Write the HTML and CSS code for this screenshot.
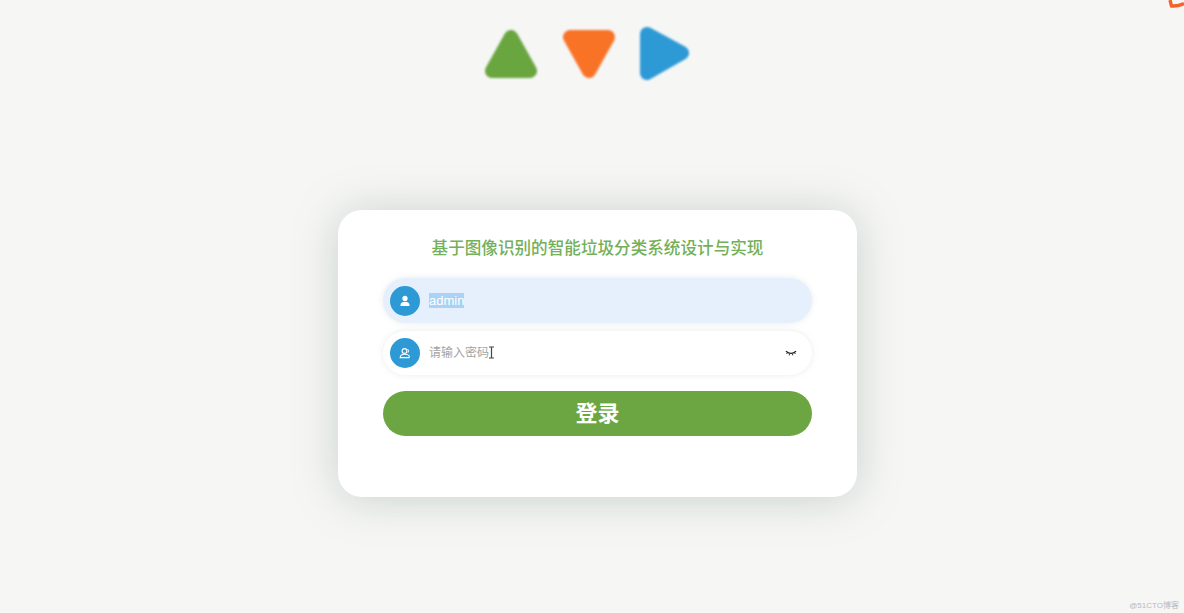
FILE: index.html
```html
<!DOCTYPE html>
<html lang="zh-CN">
<head>
    <meta charset="UTF-8">
    <meta name="viewport" content="width=device-width, initial-scale=1.0">
    <title>登录</title>
    <link rel="stylesheet" href="styles.css">
</head>
<body>
    <svg class="corner-mark" width="16" height="9" viewBox="0 0 16 9">
        <path d="M2 0 L3.5 6 Q10 6.5 16 3.5" fill="none" stroke="#f2642a" stroke-width="3.4"/>
    </svg>

    <div class="logo">
        <svg width="54" height="50" viewBox="0 0 54 50">
            <path d="M27 9 L46 43 H8 Z" fill="#69a63f" stroke="#69a63f" stroke-width="14" stroke-linejoin="round"/>
        </svg>
        <svg width="54" height="50" viewBox="0 0 54 50">
            <path d="M8 9 H46 L27 43 Z" fill="#f97327" stroke="#f97327" stroke-width="14" stroke-linejoin="round"/>
        </svg>
        <svg width="50" height="54" viewBox="0 0 50 54">
            <path d="M8 8 L43 27 L8 47 Z" fill="#2d9ad6" stroke="#2d9ad6" stroke-width="14" stroke-linejoin="round"/>
        </svg>
    </div>

    <div class="card">
        <h3 class="title">基于图像识别的智能垃圾分类系统设计与实现</h3>
        <form class="login-form">
            <div class="field field-filled">
                <span class="field-icon">
                    <svg width="12" height="12" viewBox="0 0 12 12">
                        <circle cx="6" cy="3.4" r="2.6" fill="#fff"/>
                        <path d="M1.4 11 Q1.4 6.8 6 6.8 Q10.6 6.8 10.6 11 Z" fill="#fff"/>
                    </svg>
                </span>
                <span class="field-value"><span class="selected">admin</span></span>
            </div>
            <div class="field">
                <span class="field-icon">
                    <svg width="12" height="12" viewBox="0 0 12 12">
                        <circle cx="5.5" cy="4" r="2.4" fill="none" stroke="#fff" stroke-width="1.1"/>
                        <path d="M1.2 10.6 Q1.4 7.4 5 7.3 Q9 7.2 10.4 9 L10 10.6 Z" fill="none" stroke="#fff" stroke-width="1.1"/>
                        <path d="M8.6 2 Q10.4 3.6 9 5.6" fill="none" stroke="#fff" stroke-width="1"/>
                    </svg>
                </span>
                <span class="field-placeholder">请输入密码</span>
                <svg class="text-cursor" width="7" height="13" viewBox="0 0 7 13">
                    <path d="M1 1 H6 M3.5 1 V12 M1 12 H6" fill="none" stroke="#444" stroke-width="1.2"/>
                </svg>
                <svg class="eye" width="12" height="7" viewBox="0 0 12 7">
                    <path d="M1 1.2 Q6 5.4 11 1.2" fill="none" stroke="#222" stroke-width="1.3"/>
                    <path d="M2.5 2.6 L1.6 4 M4.6 3.8 L4.2 5.4 M7.4 3.8 L7.8 5.4 M9.5 2.6 L10.4 4" stroke="#222" stroke-width="0.9"/>
                </svg>
            </div>
            <button type="button" class="login-btn">登录</button>
        </form>
    </div>

    <div class="watermark">@51CTO博客</div>
</body>
</html>
```

FILE: styles.css
```css
html, body {
    height: 100%;
}

body {
    margin: 0;
    background-color: #f6f6f5;
    font-family: "Liberation Sans", "Noto Sans CJK SC", sans-serif;
    overflow: hidden;
}

/* Logo triangles */
.logo {
    display: flex;
    align-items: flex-start;
    gap: 24px;
    height: 210px;
    box-sizing: border-box;
    padding: 28px 0 0 484px;
}

.logo svg {
    filter: blur(0.8px);
}

.logo svg:last-child {
    margin-top: -2px;
    margin-left: -1px;
}

/* Login card */
.card {
    width: 519px;
    height: 287px;
    margin-left: 338px;
    box-sizing: border-box;
    padding: 28px 45px 0;
    background-color: #ffffff;
    border-radius: 24px;
    box-shadow: 0 2px 44px rgba(110, 140, 130, 0.34);
}

.title {
    margin: 0 0 18px;
    font-size: 16.6px;
    line-height: 22px;
    font-weight: 500;
    color: #74b059;
    text-align: center;
}

.login-form {
    display: flex;
    flex-direction: column;
}

.field {
    display: flex;
    align-items: center;
    height: 44px;
    margin-bottom: 8px;
    padding-left: 7px;
    border-radius: 23px;
    background-color: #ffffff;
    box-shadow: 0 0 6px rgba(190, 200, 195, 0.35);
    font-size: 12px;
}

.field-filled {
    height: 45px;
    background-color: #e6f0fd;
}

.field-icon {
    display: flex;
    align-items: center;
    justify-content: center;
    width: 30px;
    height: 30px;
    border-radius: 50%;
    background-color: #2d9ad6;
}

.field-value {
    margin-left: 9px;
    color: #ffffff;
    font-size: 13px;
}

.selected {
    background-color: #a9d2f5;
}

.field-placeholder {
    margin-left: 9px;
    margin-top: -3px;
    color: #a3a3a3;
}

.text-cursor {
    margin-left: -1px;
    margin-top: -2px;
}

.eye {
    margin-left: auto;
    margin-right: 15px;
}

.login-btn {
    height: 45px;
    margin-top: 8px;
    padding: 0 0 6px;
    border: none;
    border-radius: 23px;
    background-color: #6ba642;
    color: #ffffff;
    font-family: inherit;
    font-size: 22px;
    font-weight: 700;
    cursor: pointer;
}

/* Bits of the recording that lie over the page */
.corner-mark {
    position: absolute;
    top: 0;
    right: 0;
}

.watermark {
    position: absolute;
    right: 5px;
    bottom: 3px;
    font-size: 8px;
    color: #b9b9b9;
}
```
